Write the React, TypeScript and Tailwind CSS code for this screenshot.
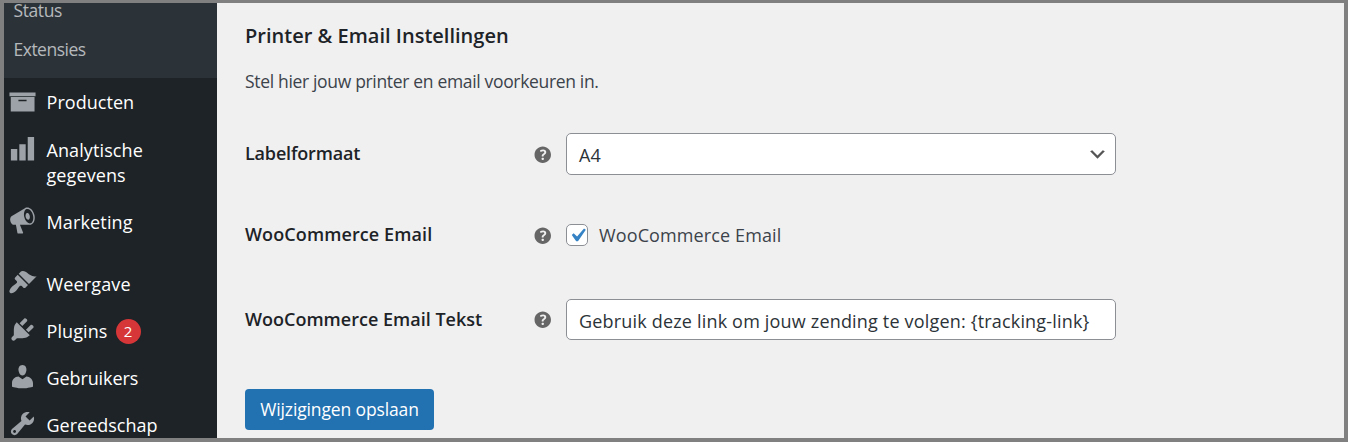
import { useState, type ReactNode } from "react";

const paths = {
  megaphone:
    "M18.15 5.94c.46 1.62.38 3.22-.02 4.48-.42 1.28-1.26 2.18-2.3 2.48-.16.06-.26.06-.4.06-.06.02-.12.02-.18.02-.06.02-.14.02-.22.02h-6.8l2.22 5.5c.02.14-.06.26-.14.34-.08.1-.24.16-.34.16H6.95c-.1 0-.26-.06-.34-.16-.08-.08-.16-.2-.14-.34l-1-5.5H4.25l-.02-.02c-.5.06-1.08-.18-1.54-.62s-.88-1.08-1.06-1.88c-.24-.8-.2-1.56-.02-2.2.18-.62.58-1.08 1.06-1.3l.02-.02 9-5.4c.1-.06.18-.1.24-.16.06-.04.14-.08.24-.12.16-.08.28-.12.5-.18 1.04-.3 2.24.1 3.22.98s1.84 2.24 2.26 3.86zm-2.58 5.98h-.02c.4-.1.74-.34 1.04-.7.58-.7.86-1.76.86-3.04 0-.64-.1-1.3-.28-1.98-.34-1.36-1.02-2.5-1.78-3.24s-1.68-1.1-2.46-.88c-.82.22-1.4.96-1.7 2-.32 1.04-.28 2.36.06 3.72.38 1.36 1 2.5 1.8 3.24.78.74 1.62 1.1 2.48.88zm-2.54-7.08c.22-.04.42-.02.62.04.38.16.76.48 1.02 1s.42 1.2.42 1.78c0 .3-.04.56-.12.8-.18.48-.44.84-.86.94-.34.1-.8-.06-1.14-.4s-.64-.86-.78-1.5c-.18-.62-.12-1.24.02-1.72s.48-.84.82-.94z",
  brush:
    "M14.48 11.06L7.41 3.99l1.5-1.5c.5-.56 2.3-.47 3.51.32 1.21.8 1.43 1.28 2.91 2.1 1.18.64 2.45 1.26 4.45.85zm-.71.71L6.7 4.7 4.93 6.47c-.39.39-.39 1.02 0 1.41l1.06 1.06c.39.39.39 1.03 0 1.42-.6.6-1.43 1.11-2.21 1.69-.35.26-.7.53-1.01.84C1.43 14.23.4 16.08 1.4 17.07c.99 1 2.84-.03 4.18-1.36.31-.31.58-.66.85-1.02.57-.78 1.08-1.61 1.69-2.21.39-.39 1.02-.39 1.41 0l1.06 1.06c.39.39 1.02.39 1.41 0z",
  plug:
    "M13.11 4.36L9.87 7.6 8 5.73l3.24-3.24c.35-.34 1.05-.2 1.56.32.52.51.66 1.21.31 1.55zm-8 1.77l.91-1.12 9.01 9.01-1.19.84c-.71.71-2.63 1.16-3.82 1.16H6.14L4.9 17.26c-.59.59-1.54.59-2.12 0-.59-.58-.59-1.53 0-2.12l1.24-1.24v-3.88c0-1.13.4-3.19 1.09-3.89zm7.26 3.97l3.24-3.24c.34-.35 1.04-.21 1.55.31.52.51.66 1.21.31 1.55l-3.24 3.25z",
  user:
    "M10 9.25c-2.27 0-2.73-3.44-2.73-3.44C7 4.02 7.82 2 9.97 2c2.16 0 2.98 2.02 2.71 3.81 0 0-.41 3.44-2.68 3.44zm0 2.57L12.72 10c2.39 0 4.52 2.33 4.52 4.53v2.49s-3.65 1.13-7.24 1.13c-3.65 0-7.24-1.13-7.24-1.13v-2.49c0-2.25 1.94-4.48 4.47-4.48z",
  wrench:
    "M16.68 9.77c-1.34 1.34-3.3 1.67-4.95.99l-5.41 6.52c-.99.99-2.59.99-3.58 0s-.99-2.59 0-3.57l6.52-5.42c-.68-1.65-.35-3.61.99-4.95 1.28-1.28 3.12-1.62 4.72-1.06l-2.89 2.89 2.82 2.82 2.86-2.87c.53 1.58.18 3.39-1.08 4.65zM3.81 16.21c.4.39 1.04.39 1.43 0 .4-.4.4-1.04 0-1.43-.39-.4-1.03-.4-1.43 0-.39.39-.39 1.03 0 1.43z",
  archive: "M1 4.5h18v2.6H1zM1.9 7.6h16.4v9.9H1.9zM7.2 9.5v1h5.6v-1z",
  bars: "M2 10.4h4.4v7.8H2zM7.8 7.1h4.4v11.1H7.8zM13.6 2h4.4v16.2h-4.4z",
  help:
    "M17 10c0-3.87-3.14-7-7-7-3.87 0-7 3.13-7 7s3.13 7 7 7c3.86 0 7-3.13 7-7zm-6.3 1.48H9.14v-.43c0-.38.08-.7.24-.98s.46-.57.88-.89c.41-.29.68-.53.81-.71.14-.18.2-.39.2-.62 0-.25-.09-.44-.28-.58-.19-.13-.45-.19-.79-.19-.58 0-1.25.19-2 .57l-.64-1.28c.87-.49 1.8-.74 2.77-.74.81 0 1.45.2 1.92.58.48.39.71.91.71 1.55 0 .43-.09.8-.29 1.11-.19.32-.57.67-1.11 1.06-.38.28-.61.49-.71.63-.1.15-.15.34-.15.57v.35zm-1.47 2.74c-.18-.17-.27-.42-.27-.73 0-.33.08-.58.26-.75s.43-.25.77-.25c.32 0 .57.09.75.26s.27.42.27.74c0 .3-.09.55-.27.72-.18.18-.43.27-.75.27-.33 0-.58-.09-.76-.26z",
  check: "M14.83 4.89l1.34.94-5.81 8.38H9.02L5.78 9.67l1.34-1.25 2.57 2.4z",
  chevron: "M5 6l5 5 5-5 2 1-7 7-7-7 2-1z",
};

function Icon({ name, className }: { name: keyof typeof paths; className: string }) {
  return (
    <svg viewBox="0 0 20 20" fill="currentColor" fillRule="evenodd" className={className}>
      <path d={paths[name]} />
    </svg>
  );
}

function MenuItem({ icon, tracking, children }: { icon: keyof typeof paths; tracking: string; children: ReactNode }) {
  return (
    <a className="flex shrink-0 items-start text-white">
      <span className="flex w-[42.5px] shrink-0 pt-[7.5px] pl-[3.5px]">
        <Icon name={icon} className="size-[29px] text-[#9ca2a7]" />
      </span>
      <span className={`flex items-center pt-[12px] pb-[10px] text-[18px] leading-[25px] ${tracking}`}>{children}</span>
    </a>
  );
}

function Field({ label, tracking, height, children }: { label: string; tracking: string; height: string; children: ReactNode }) {
  return (
    <div className={`flex items-center ${height}`}>
      <div className={`w-[285.5px] shrink-0 pb-[1px] text-[18px] leading-[25px] font-[560] text-[#1d2327] ${tracking}`}>{label}</div>
      <Icon name="help" className="mt-[1px] mr-[12px] size-[23.5px] shrink-0 text-[#666]" />
      {children}
    </div>
  );
}

export default function App() {
  const [checked, setChecked] = useState(true);
  return (
    <div className="flex h-[442px] w-[1348px] overflow-hidden border-x-4 border-t-[3px] border-b-4 border-[#808080] bg-[#f0f0f1] font-['Open_Sans','Noto_Sans',sans-serif]">
      <nav className="flex w-[213px] shrink-0 flex-col overflow-hidden bg-[#1d2327]">
        <div className="flex h-[75px] shrink-0 flex-col bg-[#2c3338] pl-[9.5px] text-[17.5px] text-[#b5b9bc]">
          <a className="h-[27px] leading-[15px] tracking-[-0.4px]">Status</a>
          <a className="leading-[39px] tracking-[-0.5px]">Extensies</a>
        </div>
        <MenuItem icon="archive" tracking="tracking-[0.05px]">Producten</MenuItem>
        <div className="h-px shrink-0" />
        <MenuItem icon="bars" tracking="tracking-[0.1px]">
          <span>Analytische<br />gegevens</span>
        </MenuItem>
        <MenuItem icon="megaphone" tracking="tracking-[0.15px]">Marketing</MenuItem>
        <div className="h-[15px] shrink-0" />
        <MenuItem icon="brush" tracking="tracking-[0.15px]">Weergave</MenuItem>
        <MenuItem icon="plug" tracking="tracking-[0.1px]">
          Plugins
          <span className="ml-[8px] flex size-[25px] items-center justify-center rounded-full bg-[#d63638] text-[15px] tracking-normal">2</span>
        </MenuItem>
        <MenuItem icon="user" tracking="tracking-[-0.1px]">Gebruikers</MenuItem>
        <MenuItem icon="wrench" tracking="tracking-normal">Gereedschap</MenuItem>
      </nav>

      <main className="flex flex-1 flex-col pl-[28px] text-[18px] text-[#3c434a]">
        <h2 className="mt-[19px] text-[20px] leading-[28px] font-[560] tracking-[0.01px] text-[#1d2327]">Printer &amp; Email Instellingen</h2>
        <p className="mt-[18px] text-[17.5px] leading-[26px] tracking-[-0.33px]">Stel hier jouw printer en email voorkeuren in.</p>

        <div className="mt-[39px]">
          <Field label="Labelformaat" tracking="tracking-[-0.18px]" height="h-[42px]">
            <button className="flex h-[42px] w-[550px] items-center justify-between rounded-[5px] border border-[#8c8f94] bg-white pr-[7.5px] pl-[12px] text-[#2c3338]">
              <span className="pt-[2px]">A4</span>
              <Icon name="chevron" className="size-[21px] text-[#555]" />
            </button>
          </Field>
        </div>
        <div className="mt-[39px]">
          <Field label="WooCommerce Email" tracking="tracking-[0.1px]" height="h-[42px]">
            <button
              role="checkbox"
              aria-checked={checked}
              onClick={() => setChecked(!checked)}
              className="flex size-[22px] items-center justify-center rounded-[5px] border border-[#8c8f94] bg-white"
            >
              {checked && <Icon name="check" className="size-[27px] shrink-0 text-[#3582c4]" />}
            </button>
            <span className="ml-[11px] tracking-[0.12px]">WooCommerce Email</span>
          </Field>
        </div>
        <div className="mt-[43px]">
          <Field label="WooCommerce Email Tekst" tracking="tracking-[0.01px]" height="h-[41px]">
            <div className="flex h-[41px] w-[550px] items-center rounded-[5px] border border-[#8c8f94] bg-white pt-[3px] pl-[12px] tracking-[0.18px] whitespace-nowrap text-[#2c3338]">
              Gebruik deze link om jouw zending te volgen: {"{tracking-link}"}
            </div>
          </Field>
        </div>
        <button className="mt-[49px] flex h-[41px] w-[189px] items-center justify-center rounded-[4px] bg-[#2271b1] text-[17.5px] tracking-[-0.13px] whitespace-nowrap text-white">
          Wijzigingen opslaan
        </button>
      </main>
    </div>
  );
}
